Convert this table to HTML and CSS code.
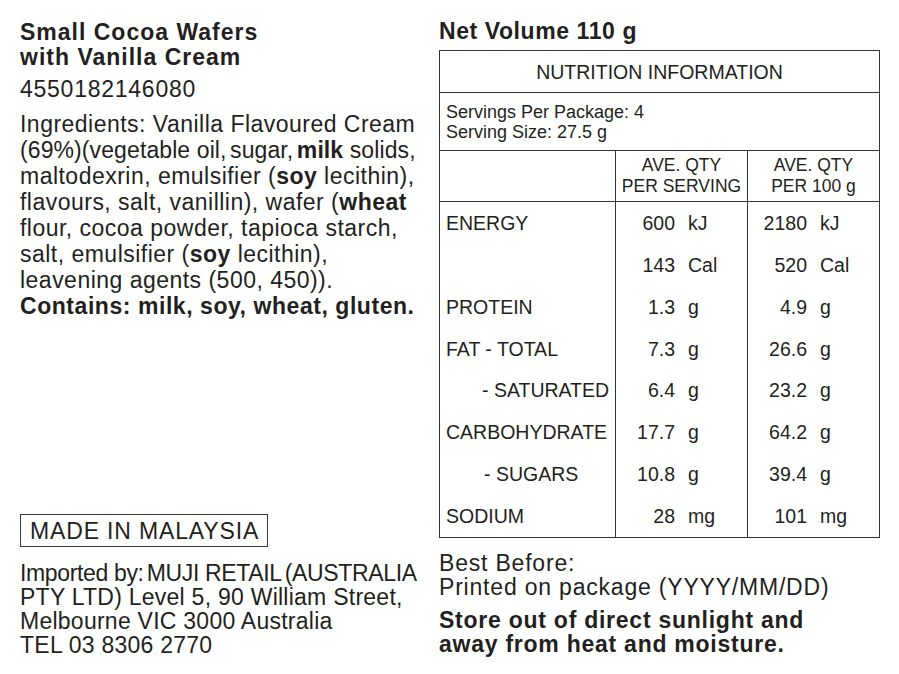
FILE: index.html
```html
<!DOCTYPE html>
<html lang="en">
<head>
<meta charset="utf-8">
<title>Small Cocoa Wafers with Vanilla Cream</title>
<link rel="stylesheet" href="styles.css">
</head>
<body>
<main class="label">
  <section class="col-left">
    <h1 class="title">Small Cocoa Wafers<br>with Vanilla Cream</h1>
    <p class="barcode">4550182146080</p>
    <p class="ingredients">Ingredients: Vanilla Flavoured Cream<br><span class="line-tight">(69%)(vegetable oil,<span class="ts"> </span>sugar,<span class="ts"> </span><b>milk</b> solids,</span><br>maltodexrin, emulsifier (<b>soy</b> lecithin),<br>flavours, salt, vanillin), wafer (<b>wheat</b><br>flour, cocoa powder, tapioca starch,<br>salt, emulsifier (<b>soy</b> lecithin),<br>leavening agents (500, 450)).<br><b class="contains">Contains: milk, soy, wheat, gluten.</b></p>
    <div class="origin">
      <div class="made-in">MADE IN MALAYSIA</div>
      <p class="importer"><span class="import-first">Imported by:<span class="ts"> </span>MUJI RETAIL<span class="ts"> </span>(AUSTRALIA</span><br>PTY LTD) Level 5, 90 William Street,<br>Melbourne VIC 3000 Australia<br>TEL 03 8306 2770</p>
    </div>
  </section>
  <section class="col-right">
    <h2 class="net">Net Volume 110 g</h2>
    <div class="nutrition">
      <div class="nut-title">NUTRITION INFORMATION</div>
      <div class="nut-serv">Servings Per Package: 4<br>Serving Size: 27.5 g</div>
      <div class="nut-head">
        <div class="cell"></div>
        <div class="cell head">AVE. QTY<br>PER SERVING</div>
        <div class="cell head last">AVE. QTY<br>PER 100 g</div>
      </div>
      <div class="nut-body">
        <div class="cell label-cell">ENERGY</div>
        <div class="cell val"><span class="num">600</span><span class="unit">kJ</span></div>
        <div class="cell val last"><span class="num">2180</span><span class="unit">kJ</span></div>

        <div class="cell label-cell"></div>
        <div class="cell val"><span class="num">143</span><span class="unit">Cal</span></div>
        <div class="cell val last"><span class="num">520</span><span class="unit">Cal</span></div>

        <div class="cell label-cell">PROTEIN</div>
        <div class="cell val"><span class="num">1.3</span><span class="unit">g</span></div>
        <div class="cell val last"><span class="num">4.9</span><span class="unit">g</span></div>

        <div class="cell label-cell">FAT - TOTAL</div>
        <div class="cell val"><span class="num">7.3</span><span class="unit">g</span></div>
        <div class="cell val last"><span class="num">26.6</span><span class="unit">g</span></div>

        <div class="cell label-cell sub">- SATURATED</div>
        <div class="cell val"><span class="num">6.4</span><span class="unit">g</span></div>
        <div class="cell val last"><span class="num">23.2</span><span class="unit">g</span></div>

        <div class="cell label-cell">CARBOHYDRATE</div>
        <div class="cell val"><span class="num">17.7</span><span class="unit">g</span></div>
        <div class="cell val last"><span class="num">64.2</span><span class="unit">g</span></div>

        <div class="cell label-cell sub sub2">- SUGARS</div>
        <div class="cell val"><span class="num">10.8</span><span class="unit">g</span></div>
        <div class="cell val last"><span class="num">39.4</span><span class="unit">g</span></div>

        <div class="cell label-cell">SODIUM</div>
        <div class="cell val"><span class="num">28</span><span class="unit">mg</span></div>
        <div class="cell val last"><span class="num">101</span><span class="unit">mg</span></div>
      </div>
    </div>
    <p class="best">Best Before:<br>Printed on package (YYYY/MM/DD)</p>
    <p class="store">Store out of direct sunlight and<br>away from heat and moisture.</p>
  </section>
</main>
</body>
</html>
```
FILE: styles.css
```css
html, body {
  margin: 0;
  padding: 0;
  background: #ffffff;
}

body {
  font-family: "Liberation Sans", Arial, Helvetica, sans-serif;
  color: #231f20;
  width: 899px;
  height: 674px;
  overflow: hidden;
}

.label {
  display: grid;
  grid-template-columns: 400px 441px;
  column-gap: 19px;
  padding: 17px 0 0 20px;
  height: 657px;
  box-sizing: border-box;
}

p, h1, h2 {
  margin: 0;
}

/* left column */
.col-left {
  display: flex;
  flex-direction: column;
  padding-top: 3px;
  white-space: nowrap;
}

.title {
  font-size: 23px;
  font-weight: bold;
  line-height: 25px;
  letter-spacing: 1px;
}

.barcode {
  margin-top: 6px;
  font-size: 23px;
  line-height: 26px;
  letter-spacing: 0.75px;
}

.ingredients {
  margin-top: 9px;
  font-size: 23px;
  line-height: 26px;
  letter-spacing: 0.48px;
}

.ingredients b {
  font-weight: bold;
}

.contains {
  letter-spacing: 0.55px;
}

.line-tight {
  letter-spacing: 0.1px;
}

.ts {
  word-spacing: -3px;
}

.origin {
  margin-top: auto;
}

.made-in {
  display: inline-block;
  border: 1px solid #3a3a3a;
  padding: 2px 8px 0 9px;
  font-size: 23px;
  line-height: 29px;
  letter-spacing: 0.85px;
}

.importer {
  margin-top: 14px;
  font-size: 23px;
  line-height: 24px;
  letter-spacing: 0.25px;
}

.import-first {
  letter-spacing: -0.35px;
}

/* right column */
.col-right {
  display: flex;
  flex-direction: column;
  white-space: nowrap;
}

.net {
  margin-top: 2px;
  font-size: 23px;
  font-weight: bold;
  line-height: 25px;
  letter-spacing: 0.58px;
}

.nutrition {
  margin-top: 6px;
  border: 1px solid #333;
  width: 441px;
  box-sizing: border-box;
}

.nut-title {
  display: flex;
  align-items: center;
  justify-content: center;
  font-size: 19.5px;
  padding-top: 1px;
  box-sizing: border-box;
  height: 42px;
  border-bottom: 1px solid #333;
}

.nut-serv {
  height: 57px;
  border-bottom: 1px solid #333;
  display: flex;
  flex-direction: column;
  justify-content: center;
  padding-left: 6px;
  font-size: 18px;
  line-height: 20px;
}

.nut-head {
  display: grid;
  grid-template-columns: 176px 132px 131px;
  height: 50px;
  border-bottom: 1px solid #333;
}

.cell {
  border-right: 1px solid #333;
}

.cell.last {
  border-right: none;
}

.head {
  display: flex;
  flex-direction: column;
  justify-content: center;
  align-items: center;
  text-align: center;
  font-size: 17.5px;
  line-height: 21px;
}

.nut-body {
  display: grid;
  grid-template-columns: 176px 132px 131px;
  grid-template-rows: repeat(8, 1fr);
  height: 335px;
  font-size: 19.5px;
}

.label-cell {
  display: flex;
  align-items: center;
  padding-left: 6px;
  padding-top: 1px;
}

.label-cell.sub {
  padding-left: 42px;
}

.label-cell.sub2 {
  padding-left: 44px;
}

.val {
  display: flex;
  align-items: center;
  padding-top: 1px;
}

.num {
  width: 59px;
  text-align: right;
}

.unit {
  margin-left: 13px;
}

.best {
  margin-top: 13px;
  font-size: 23px;
  line-height: 24px;
  letter-spacing: 0.8px;
}

.store {
  margin-top: 9px;
  font-size: 23px;
  font-weight: bold;
  line-height: 24px;
  letter-spacing: 0.75px;
}
```
